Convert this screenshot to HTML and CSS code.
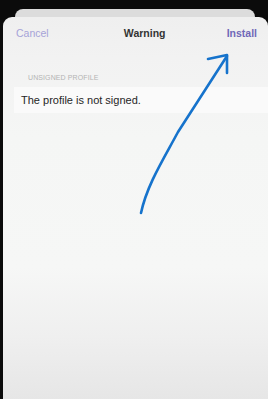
FILE: index.html
```html
<!DOCTYPE html>
<html>
<head>
<meta charset="utf-8">
<link rel="stylesheet" href="styles.css">
</head>
<body>
<div class="screen">
  <div class="back-card"></div>
  <div class="sheet">
    <div class="nav">
      <span class="cancel">Cancel</span>
      <span class="title">Warning</span>
      <span class="install">Install</span>
    </div>
    <div class="section-label">UNSIGNED PROFILE</div>
    <div class="row">The profile is not signed.</div>
  </div>
  <svg class="arrow" width="268" height="399" viewBox="0 0 268 399">
    <path d="M141 213 C 147 185, 163 160, 178 132 L 227 56" fill="none" stroke="#1673cc" stroke-width="2.6" stroke-linecap="round" stroke-linejoin="round"/>
    <path d="M208 59 L227 55 L227 73" fill="none" stroke="#1673cc" stroke-width="2.6" stroke-linecap="round" stroke-linejoin="round"/>
  </svg>
</div>
</body>
</html>
```
FILE: styles.css
```css
html, body {
  margin: 0;
  padding: 0;
  background: #0b0b0b;
}
.screen {
  position: relative;
  width: 268px;
  height: 399px;
  overflow: hidden;
  padding-top: 9px;
  box-sizing: border-box;
  display: flex;
  flex-direction: column;
  font-family: "Liberation Sans", Arial, sans-serif;
}
.back-card {
  height: 8px;
  margin: 0 13px 0 15px;
  background: #dcdcdc;
  border-radius: 9px 9px 0 0;
  flex: none;
}
.sheet {
  flex: 1;
  margin-left: 3px;
  border-radius: 9px 9px 0 0;
  background: linear-gradient(180deg, #efefef 0px, #f2f2f2 40px, #f5f6f5 120px, #f6f7f6 250px, #efefef 320px, #e6e6e6 383px);
  display: flex;
  flex-direction: column;
}
.nav {
  height: 32px;
  display: flex;
  align-items: center;
  justify-content: space-between;
  padding: 0 11px 0 13px;
  font-size: 10.5px;
}
.cancel {
  color: #a6a3d8;
}
.title {
  color: #333333;
  font-weight: 700;
  font-size: 10.5px;
  margin-left: 14px;
}
.install {
  color: #7068b8;
  font-weight: 700;
}
.section-label {
  margin: 25px 0 0 25px;
  font-size: 7px;
  color: #b3b3b3;
  letter-spacing: 0.1px;
}
.row {
  margin: 6px 0 0 11px;
  height: 26px;
  display: flex;
  align-items: center;
  padding-left: 7px;
  background: #fafafa;
  color: #262626;
  font-size: 11px;
}
.arrow {
  position: absolute;
  left: 0;
  top: 0;
}
```
